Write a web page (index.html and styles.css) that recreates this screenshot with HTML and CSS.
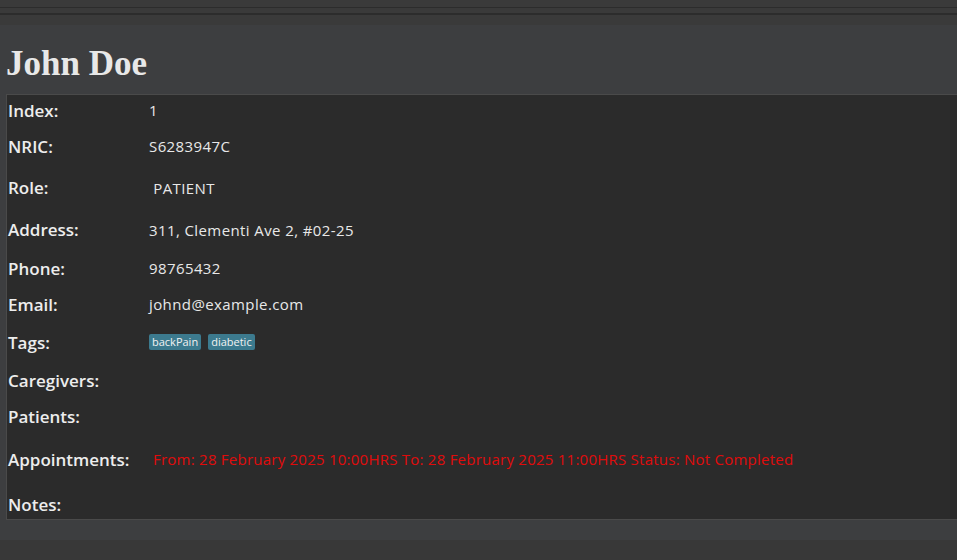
FILE: index.html
```html
<!DOCTYPE html>
<html>
<head>
<meta charset="utf-8">
<link rel="stylesheet" href="styles.css">
</head>
<body>
<div class="topbar">
  <div class="strip s1"></div>
  <div class="strip s2"></div>
  <div class="strip s3"></div>
</div>
<main class="panel">
  <h1 class="name">John Doe</h1>
  <section class="card">
    <div class="label">Index:</div><div class="value">1</div>
    <div class="label">NRIC:</div><div class="value">S6283947C</div>
    <div class="label">Role:</div><div class="value role">&nbsp;PATIENT</div>
    <div class="label">Address:</div><div class="value">311, Clementi Ave 2, #02-25</div>
    <div class="label">Phone:</div><div class="value">98765432</div>
    <div class="label">Email:</div><div class="value">johnd@example.com</div>
    <div class="label">Tags:</div>
    <div class="value tags"><span class="tag">backPain</span><span class="tag">diabetic</span></div>
    <div class="label">Caregivers:</div><div class="value"></div>
    <div class="label">Patients:</div><div class="value"></div>
    <div class="label">Appointments:</div>
    <div class="value appt">From: 28 February 2025 10:00HRS To: 28 February 2025 11:00HRS Status: Not Completed</div>
    <div class="label notes">Notes:</div><div class="value notes"></div>
  </section>
</main>
<div class="bottombar"></div>
</body>
</html>
```
FILE: styles.css
```css
html, body {
  margin: 0;
  padding: 0;
  background: #383838;
  overflow: hidden;
}
body {
  width: 957px;
  height: 560px;
  display: flex;
  flex-direction: column;
}
.topbar {
  display: flex;
  flex-direction: column;
  background: #3a3a3a;
}
.strip.s1 {
  height: 7px;
  border-bottom: 1px solid #2c2c2c;
}
.strip.s2 {
  height: 5px;
  border-bottom: 2px solid #2c2c2c;
}
.strip.s3 {
  height: 10px;
}
.panel {
  background: #3d3e40;
  padding: 19px 0 20px 6px;
  overflow: hidden;
}
.name {
  margin: 0 0 10px 0;
  font-family: "Liberation Serif", "Times New Roman", serif;
  font-weight: bold;
  font-size: 35px;
  line-height: 40px;
  color: #e8e8e8;
}
.card {
  width: 1000px;
  height: 424px;
  background: #2b2b2b;
  border: 1px solid #4a4a4a;
  display: grid;
  grid-template-columns: 141px 1fr;
  grid-template-rows: 30px 42px 41px 43px 34px 38px 38px 38px 35px 50px 35px;
  padding-left: 1px;
  font-family: "Open Sans", "Noto Sans", sans-serif;
  color: #e8e8e8;
}
.label, .value {
  display: flex;
  align-items: center;
}
.label {
  font-size: 17px;
  font-weight: 600;
  color: #ededed;
}
.value {
  font-size: 15px;
  letter-spacing: 0.4px;
}
.notes {
  padding-top: 6px;
}
.tags {
  gap: 7px;
  letter-spacing: 0;
}
.tag {
  background: #3c7a8e;
  color: #f2f2f2;
  font-size: 11px;
  line-height: 16px;
  padding: 0 3px;
  border-radius: 2px;
}
.appt {
  color: #e00b0b;
  font-size: 15px;
  letter-spacing: 0.24px;
  padding-left: 4px;
}
.bottombar {
  flex: 1;
  background: #383838;
}
```
